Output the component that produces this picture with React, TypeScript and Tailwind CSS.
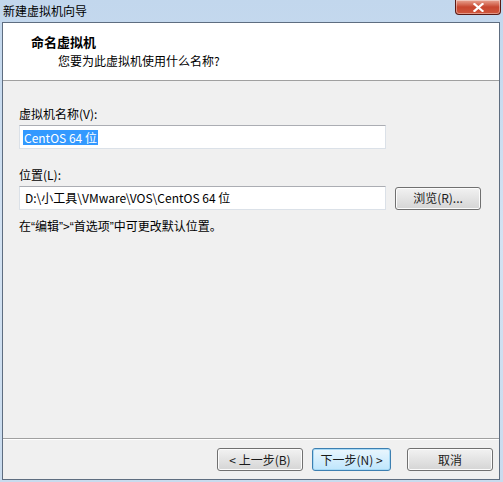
import React from 'react';

const font = { fontFamily: '"Noto Sans CJK SC", "Liberation Sans", sans-serif' };

function Button({ children, focused = false, className = '' }: { children: React.ReactNode; focused?: boolean; className?: string }) {
  return (
    <button
      className={`flex h-[23px] items-center justify-center rounded-[3px] border text-[12px] leading-none text-[#1a1a1a] ${
        focused
          ? 'border-[#3c7fb1] bg-gradient-to-b from-[#eaf6fd] to-[#bee6fd] shadow-[inset_0_0_0_1px_#a7d9f5]'
          : 'border-[#707070] bg-gradient-to-b from-[#f2f2f2] to-[#d5d5d5] shadow-[inset_0_0_0_1px_#fcfcfc]'
      } ${className}`}
    >
      {children}
    </button>
  );
}

function TextBox({ children }: { children: React.ReactNode }) {
  return (
    <div className="flex h-[24px] w-[367px] items-center border border-[#dbe1e8] border-t-[#abadb3] bg-white px-[3px] text-[12px] text-black">
      {children}
    </div>
  );
}

// narrow latin quotes, the CJK ones are full width
const Q = ({ c }: { c: string }) => <span className="font-['Liberation_Sans']">{c}</span>;

export default function App() {
  return (
    <div style={font} className="flex h-[482px] w-[503px] flex-col bg-gradient-to-b from-[#c2d7ed] via-[#d3e2f2] to-[#c9dbee]">
      {/* title bar */}
      <div className="flex h-[22px] shrink-0 items-start justify-between">
        <span className="pl-[3px] pt-[2px] text-[12px] leading-[18px] text-black">新建虚拟机向导</span>
        <div className="mr-[2px] flex h-[15px] w-[46px] items-center justify-center rounded-b-[4px] border border-t-0 border-[#5a1a14] bg-gradient-to-b from-[#e8a493] via-[#c7462f] to-[#d0573c] shadow-[inset_0_0_0_1px_rgba(255,255,255,0.4)]">
          <svg width="11" height="9" viewBox="0 0 11 9">
            <path d="M1.5 1 L9.5 8 M9.5 1 L1.5 8" stroke="#fff" strokeWidth="2.2" strokeLinecap="square" />
          </svg>
        </div>
      </div>

      {/* client area */}
      <div className="mb-[2px] ml-[2px] mr-[3px] flex flex-1 flex-col border border-[#5e6d80] bg-[#f0f0f0]">
        {/* header */}
        <div className="flex h-[58px] shrink-0 flex-col items-start border-b border-[#a0a0a0] bg-white pl-[28px] pt-[9px]">
          <div className="text-[13px] font-bold leading-[20px] text-black">命名虚拟机</div>
          <div className="ml-[27px] text-[12px] leading-[18px] text-black">您要为此虚拟机使用什么名称?</div>
        </div>

        {/* form */}
        <div className="flex flex-1 flex-col pl-[16px] pt-[25px] text-[12px] text-black">
          <label className="leading-[16px]">虚拟机名称(V):</label>
          <div className="mt-[3px]">
            <TextBox>
              <span className="bg-[#3399ff] px-[1px] leading-[15px] text-white">CentOS 64 位</span>
            </TextBox>
          </div>

          <label className="mt-[18px] leading-[16px]">位置(L):</label>
          <div className="mt-[3px] flex items-center gap-[9px]">
            <TextBox>
              <span className="pl-[2px]">D:\小工具\VMware\VOS\CentOS 64 位</span>
            </TextBox>
            <Button className="w-[86px]">浏览(R)...</Button>
          </div>

          <p className="mt-[8px] leading-[16px]">
            在<Q c="“" />编辑<Q c="”" />&gt;<Q c="“" />首选项<Q c="”" />中可更改默认位置。
          </p>
        </div>

        {/* footer */}
        <div className="h-[41px] shrink-0 border-t border-[#a0a0a0] shadow-[inset_0_1px_0_#ffffff]">
          <div className="flex justify-end pr-[6px] pt-[9px]">
            <Button className="w-[86px]">&lt; 上一步(B)</Button>
            <Button focused className="ml-[9px] w-[79px]">下一步(N) &gt;</Button>
            <Button className="ml-[16px] w-[86px]">取消</Button>
          </div>
        </div>
      </div>
    </div>
  );
}
